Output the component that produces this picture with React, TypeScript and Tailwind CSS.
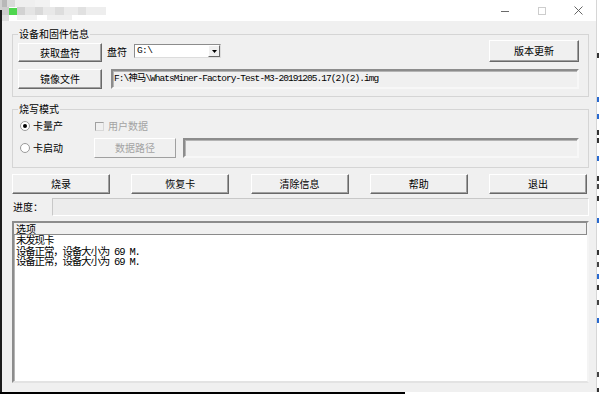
import clsx from 'clsx'
import type { ReactNode } from 'react'

const mono = "font-['Liberation_Mono','Noto_Sans_CJK_SC',monospace]"

// 3D classic win32 button
function Btn({ children, className, disabled }: { children: ReactNode; className?: string; disabled?: boolean }) {
  return (
    <div
      className={clsx(
        'flex items-center justify-center text-[10px] leading-none bg-[#f0f0f0] border border-t-white border-l-white',
        disabled
          ? 'border-r-[#a0a0a0] border-b-[#a0a0a0] text-[#a3a3a3]'
          : 'border-r-[#696969] border-b-[#696969] shadow-[inset_-1px_-1px_0_#a0a0a0] text-black',
        className
      )}
    >
      {children}
    </div>
  )
}

// sunken edit box
function Field({ children, className }: { children?: ReactNode; className?: string }) {
  return (
    <div
      className={clsx(
        'flex items-center border-2 border-t-[#8c8c8c] border-l-[#8c8c8c] border-r-[#f7f7f7] border-b-[#f7f7f7] bg-[#f0f0f0] shadow-[inset_1px_1px_0_#b4b4b4]',
        className
      )}
    >
      {children}
    </div>
  )
}

function Group({ label, children, className }: { label: string; children: ReactNode; className?: string }) {
  return (
    <div className={clsx('relative border border-[#d5d5d5]', className)}>
      <span className="absolute left-[5px] -top-[7px] px-[1px] bg-[#f0f0f0] text-[10px] leading-[12px]">{label}</span>
      {children}
    </div>
  )
}

function Radio({ checked, label }: { checked?: boolean; label: string }) {
  return (
    <div className="flex items-center gap-[3px]">
      <span className="w-[10px] h-[10px] rounded-full bg-white border border-[#9a9a9a] flex items-center justify-center">
        {checked && <span className="w-[4px] h-[4px] rounded-full bg-black" />}
      </span>
      <span className="text-[10px] leading-none">{label}</span>
    </div>
  )
}

// pixelated (blurred out) window title
const mosaic: [number, number, number, number, string][] = [
  [0, 0, 5, 7, '#b8b8b8'],
  [5, 0, 8, 7, '#dadada'],
  [13, 0, 20, 7, '#efefef'],
  [33, 0, 15, 7, '#f2f2f2'],
  [0, 7, 7, 8, '#cccccc'],
  [7, 8, 8, 7, '#4fd64f'],
  [15, 7, 8, 8, '#d2d2d2'],
  [23, 7, 10, 8, '#e4e4e4'],
  [33, 7, 8, 8, '#d9d9d9'],
  [41, 7, 12, 8, '#e8e8e8'],
  [53, 7, 9, 8, '#dddddd'],
  [62, 7, 14, 8, '#ebebeb'],
  [76, 7, 8, 8, '#e1e1e1'],
  [84, 7, 20, 8, '#eeeeee'],
  [0, 15, 7, 6, '#dedede'],
  [15, 15, 20, 5, '#f1f1f1'],
  [45, 15, 25, 5, '#efefef'],
]

function TitleBar() {
  return (
    <div className="h-[21px] bg-white flex items-stretch">
      <svg width="110" height="21" className="shrink-0">
        {mosaic.map(([x, y, w, h, c], i) => (
          <rect key={i} x={x} y={y} width={w} height={h} fill={c} />
        ))}
      </svg>
      <div className="flex-1" />
      <div className="w-[37px] flex items-center justify-center">
        <svg width="8" height="8" viewBox="0 0 8 8">
          <line x1="0" y1="4.5" x2="8" y2="4.5" stroke="#6a6a6a" strokeWidth="1" />
        </svg>
      </div>
      <div className="w-[37px] flex items-center justify-center">
        <svg width="8" height="8" viewBox="0 0 8 8">
          <rect x="0.5" y="0.5" width="7" height="7" fill="none" stroke="#cdcdcd" strokeWidth="1" />
        </svg>
      </div>
      <div className="w-[36px] flex items-center justify-center">
        <svg width="9" height="9" viewBox="0 0 9 9">
          <path d="M0.5 0.5 L8.5 8.5 M8.5 0.5 L0.5 8.5" stroke="#555" strokeWidth="0.9" />
        </svg>
      </div>
    </div>
  )
}

const frags: [number, string][] = [
  [53, '#333'], [97, '#2a6ad0'], [114, '#2a6ad0'], [130, '#333'], [138, '#333'], [156, '#2a6ad0'],
  [176, '#333'], [184, '#444'], [196, '#333'], [218, '#2a6ad0'], [250, '#333'], [262, '#444'],
  [274, '#2a6ad0'], [285, '#333'], [300, '#444'], [318, '#2a6ad0'], [372, '#444'], [388, '#333'],
]

export default function App() {
  return (
    <div className="w-[600px] h-[394px] overflow-hidden bg-white flex flex-col font-['Noto_Sans_CJK_SC',sans-serif] text-black">
      <div className="flex h-[392px]">
        <div className="w-[2px] flex flex-col">
          <div className="h-[10px] bg-[#d0d0d0]" />
          <div className="flex-1 bg-[#1c1c1c]" />
        </div>

        <div className="w-[594px] flex flex-col">
          <TitleBar />
          <div className="flex-1 bg-[#f0f0f0] pl-[10px] pr-[7px] pt-[13px] pb-[9px] flex flex-col">
            <Group label="设备和固件信息" className="pl-[5px] pr-[9px] pt-[5px] pb-[7px]">
              <div className="flex items-start h-[22px]">
                <Btn className="mt-[3px] w-[84px] h-[19px]">获取盘符</Btn>
                <span className="ml-[5px] mt-[7px] text-[10px] leading-none">盘符</span>
                <div className="ml-[7px] mt-[4px] w-[87px] h-[14px] bg-white border border-t-[#8c8c8c] border-l-[#8c8c8c] border-r-[#dcdcdc] border-b-[#dcdcdc] flex items-stretch">
                  <span className={clsx('flex-1 pl-[2px] text-[9.5px] leading-[12px] tracking-[-0.6px]', mono)}>G:\</span>
                  <span className="w-[12px] bg-[#f0f0f0] border border-t-white border-l-white border-r-[#696969] border-b-[#696969] flex items-center justify-center">
                    <svg width="5" height="3" viewBox="0 0 5 3">
                      <path d="M0 0 H5 L2.5 3 Z" fill="#000" />
                    </svg>
                  </span>
                </div>
                <Btn className="ml-auto w-[90px] h-[22px]">版本更新</Btn>
              </div>
              <div className="flex mt-[7px] h-[20px]">
                <Btn className="w-[84px] h-[20px]">镜像文件</Btn>
                <Field className="ml-[9px] flex-1 h-[20px] pl-[1px]">
                  <span className={clsx('text-[9.5px] leading-none tracking-[-0.95px] whitespace-nowrap', mono)}>
                    F:\神马\WhatsMiner-Factory-Test-M3-20191205.17(2)(2).img
                  </span>
                </Field>
              </div>
            </Group>

            <Group label="烧写模式" className="mt-[12px] pl-[7px] pr-[9px] pt-[10px] pb-[9px]">
              <div className="flex items-center h-[12px]">
                <div className="w-[75px]">
                  <Radio checked label="卡量产" />
                </div>
                <div className="flex items-center gap-[4px]">
                  <span className="w-[9px] h-[9px] border border-t-[#a0a0a0] border-l-[#a0a0a0] border-r-[#d8d8d8] border-b-[#d8d8d8] bg-[#f0f0f0]" />
                  <span className="text-[10px] leading-none text-[#a3a3a3]">用户数据</span>
                </div>
              </div>
              <div className="flex items-center mt-[6px] h-[20px]">
                <div className="w-[74px]">
                  <Radio label="卡启动" />
                </div>
                <Btn disabled className="w-[82px] h-[20px]">数据路径</Btn>
                <Field className="ml-[7px] flex-1 h-[20px]" />
              </div>
            </Group>

            <div className="mt-[6px] pr-[2px] flex justify-between">
              {['烧录', '恢复卡', '清除信息', '帮助', '退出'].map((t) => (
                <Btn key={t} className="w-[98px] h-[20px]">{t}</Btn>
              ))}
            </div>

            <div className="mt-[4px] flex items-center h-[18px] pl-[1px]">
              <span className="w-[39px] text-[10px] leading-none">进度：</span>
              <div className="flex-1 h-[18px] bg-[#ececec] border border-t-[#c8c8c8] border-l-[#c8c8c8] border-r-white border-b-white" />
            </div>

            <div className="mt-[5px] flex-1 flex flex-col bg-white border-2 border-t-[#8c8c8c] border-l-[#8c8c8c] border-r-[#f4f4f4] border-b-[#e3e3e3] shadow-[inset_1px_1px_0_#b4b4b4]">
              <div className="h-[12px] bg-[#f0f0f0] border-b border-r border-b-[#8a8a8a] border-r-[#8a8a8a] pl-[2px] text-[10px] leading-[11px]">
                选项
              </div>
              <div className={clsx('pl-[2px] pt-[1px] text-[10.5px] leading-[10.5px] tracking-[-1.2px]', mono)}>
                <div>未发现卡</div>
                <div>设备正常，设备大小为 69 M.</div>
                <div>设备正常，设备大小为 69 M.</div>
              </div>
            </div>
          </div>
        </div>

        <div className="w-[4px] border-l border-[#d6d6d6] bg-white">
          <svg width="3" height="392">
            {frags.map(([y, c], i) => (
              <rect key={i} x="0" y={y} width="2" height="5" fill={c} />
            ))}
          </svg>
        </div>
      </div>
      <div className="h-[2px] flex">
        <div className="w-[405px] bg-black" />
        <div className="flex-1 bg-white" />
      </div>
    </div>
  )
}
